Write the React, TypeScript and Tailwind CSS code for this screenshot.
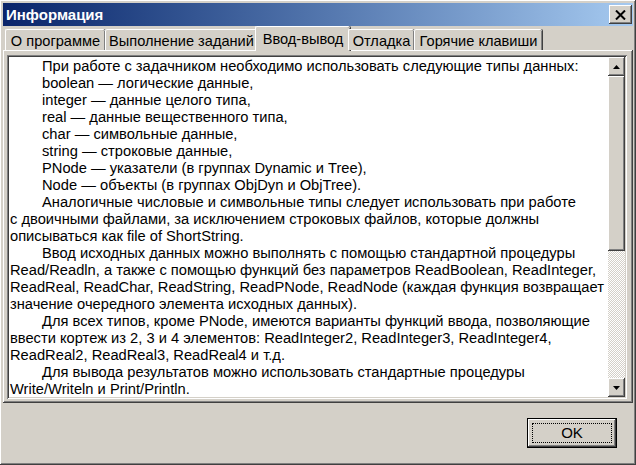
import React from "react";

const FONT = { fontFamily: '"Liberation Sans", Arial, sans-serif' };

const raised =
  "shadow-[inset_-1px_-1px_#404040,inset_1px_1px_#ffffff,inset_-2px_-2px_#808080,inset_2px_2px_#d4d0c8]";
const sunken =
  "shadow-[inset_1px_1px_#808080,inset_-1px_-1px_#ffffff,inset_2px_2px_#404040,inset_-2px_-2px_#d4d0c8]";

const lines: [boolean, string][] = [
  [true, "При работе с задачником необходимо использовать следующие типы данных:"],
  [true, "boolean — логические данные,"],
  [true, "integer — данные целого типа,"],
  [true, "real — данные вещественного типа,"],
  [true, "char — символьные данные,"],
  [true, "string — строковые данные,"],
  [true, "PNode — указатели (в группах Dynamic и Tree),"],
  [true, "Node — объекты (в группах ObjDyn и ObjTree)."],
  [true, "Аналогичные числовые и символьные типы следует использовать при работе"],
  [false, "с двоичными файлами, за исключением строковых файлов, которые должны"],
  [false, "описываться как file of ShortString."],
  [true, "Ввод исходных данных можно выполнять с помощью стандартной процедуры"],
  [false, "Read/Readln, а также с помощью функций без параметров ReadBoolean, ReadInteger,"],
  [false, "ReadReal, ReadChar, ReadString, ReadPNode, ReadNode (каждая функция возвращает"],
  [false, "значение очередного элемента исходных данных)."],
  [true, "Для всех типов, кроме PNode, имеются варианты функций ввода, позволяющие"],
  [false, "ввести кортеж из 2, 3 и 4 элементов: ReadInteger2, ReadInteger3, ReadInteger4,"],
  [false, "ReadReal2, ReadReal3, ReadReal4 и т.д."],
  [true, "Для вывода результатов можно использовать стандартные процедуры"],
  [false, "Write/Writeln и Print/Println."],
];

const tabs = [
  { label: "О программе", w: "w-[100px]" },
  { label: "Выполнение заданий", w: "w-[152px]" },
  { label: "Ввод-вывод", w: "w-[95px]", active: true },
  { label: "Отладка", w: "w-[66px]" },
  { label: "Горячие клавиши", w: "w-[128px]" },
];

function Arrow({ up }: { up?: boolean }) {
  return (
    <svg width="7" height="4" viewBox="0 0 7 4">
      {up ? <path d="M3.5 0 L7 4 L0 4 Z" fill="#000" /> : <path d="M0 0 L7 0 L3.5 4 Z" fill="#000" />}
    </svg>
  );
}

export default function App() {
  return (
    <div
      className={`w-[636px] h-[465px] bg-[#d4d0c8] p-[3px] flex flex-col ${raised}`}
      style={FONT}
    >
      {/* title bar */}
      <div className="h-[23px] flex items-center justify-between pl-[3px] pr-[1px] bg-gradient-to-r from-[#0a246a] to-[#a6caf0]">
        <span className="text-white font-bold text-[15px] leading-none">Информация</span>
        <div className={`w-[23px] h-[19px] bg-[#d4d0c8] flex items-center justify-center ${raised}`}>
          <svg width="11" height="10" viewBox="0 0 11 10">
            <path d="M1 0.5 L10 9.5 M10 0.5 L1 9.5" stroke="#000" strokeWidth="2" />
          </svg>
        </div>
      </div>

      {/* tabs */}
      <div className="h-[24px] flex items-end pl-[2px] relative z-10">
        {tabs.map((t) =>
          t.active ? (
            <div
              key={t.label}
              className={`${t.w} h-[25px] -mx-[2px] -mb-[1px] bg-[#d4d0c8] rounded-t-[2px] border-l border-t border-white shadow-[inset_-1px_0_#808080,1px_0_#404040] flex items-start justify-center pt-[2px] text-[14.6px] text-black`}
            >
              {t.label}
            </div>
          ) : (
            <div
              key={t.label}
              className={`${t.w} h-[21px] bg-[#d4d0c8] rounded-t-[2px] border-l border-t border-white shadow-[inset_-1px_0_#808080,1px_0_#404040] flex items-start justify-center pt-[1px] text-[14.6px] text-black`}
            >
              {t.label}
            </div>
          )
        )}
      </div>

      {/* tab sheet */}
      <div className={`h-[353px] pt-[5px] pl-[4px] pr-[6px] pb-[4px] ${raised}`}>
        <div className={`h-full p-[2px] bg-white flex ${sunken}`}>
          <div className="flex-1 pl-[1px] pt-[1px] text-[14.7px] leading-[17px] text-black whitespace-nowrap overflow-hidden">
            {lines.map(([indent, text], i) => (
              <div key={i} className={indent ? "pl-[32px]" : ""}>
                {text}
              </div>
            ))}
          </div>
          <div className="w-[17px] flex flex-col">
            <div className={`h-[19px] bg-[#d4d0c8] flex items-center justify-center ${raised}`}>
              <Arrow up />
            </div>
            <div className={`h-[175px] bg-[#d4d0c8] ${raised}`} />
            <div className="flex-1 bg-[repeating-conic-gradient(#ffffff_0_25%,#d4d0c8_0_50%)] bg-[length:2px_2px]" />
            <div className={`h-[19px] bg-[#d4d0c8] flex items-center justify-center ${raised}`}>
              <Arrow />
            </div>
          </div>
        </div>
      </div>

      {/* footer */}
      <div className="flex-1 flex justify-end items-start pt-[15px] pr-[16px]">
        <div className="w-[90px] h-[30px] border border-black">
          <div className={`w-full h-full flex items-center justify-center p-[4px] ${raised}`}>
            <div className="w-full h-full border border-dotted border-black flex items-center justify-center text-[15px] text-black">
              OK
            </div>
          </div>
        </div>
      </div>
    </div>
  );
}
